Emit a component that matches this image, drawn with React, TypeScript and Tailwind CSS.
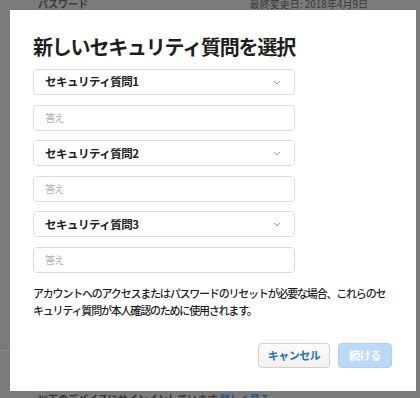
import React from 'react';

const jp = "font-['Hiragino_Sans','Noto_Sans_CJK_JP',sans-serif]";

const Chevron = () => (
  <svg width="8" height="5" viewBox="0 0 8 5" fill="none">
    <path d="M1 1l3 3 3-3" stroke="#9a9a9a" strokeWidth="1" />
  </svg>
);

const QuestionSelect: React.FC<{ label: string }> = ({ label }) => (
  <div className="h-[26px] flex items-center justify-between pl-[11px] pr-[13px] border border-[#dcdcdc] rounded-[4px] bg-white">
    <span className="text-[11.5px] font-bold tracking-[-0.5px] text-[#222]">{label}</span>
    <Chevron />
  </div>
);

const AnswerInput: React.FC = () => (
  <div className="h-[26px] flex items-center pl-[11px] border border-[#dcdcdc] rounded-[4px] bg-white">
    <span className="text-[10.5px] tracking-[-1.5px] text-[#b0b0b0]">答え</span>
  </div>
);

const App: React.FC = () => {
  return (
    <div className={`relative w-[420px] h-[398px] overflow-hidden bg-[#7b7b7b] ${jp}`}>
      {/* page behind the overlay */}
      <div className="flex flex-col h-full">
        <div className="flex justify-between items-start pl-[38px] pr-[52px] -mt-[4px] text-[10px] text-[#3a3a3a]">
          <span className="font-bold">パスワード</span>
          <span>最終変更日: 2018年4月9日</span>
        </div>
        <div className="flex-1" />
        <div className="h-px w-[12px] bg-[#8e8e8e] mb-[40px]" />
        <div className="pl-[38px] -mb-[8px] text-[10px] text-[#333] font-bold">
          以下のデバイスにサインインしています <span className="text-[#23507e]">詳しく見る</span>
        </div>
      </div>

      {/* dialog */}
      <div className="absolute left-[10px] top-[10px] w-[406px] h-[381px] bg-white pt-[24px] pl-[23px] pr-[24px] flex flex-col">
        <h1 className="text-[20px] leading-[26px] font-bold tracking-[-1.2px] text-[#1e1e1e]">
          新しいセキュリティ質問を選択
        </h1>
        <div className="mt-[9px] w-[262px] flex flex-col gap-[9.6px]">
          <QuestionSelect label="セキュリティ質問1" />
          <AnswerInput />
          <QuestionSelect label="セキュリティ質問2" />
          <AnswerInput />
          <QuestionSelect label="セキュリティ質問3" />
          <AnswerInput />
        </div>
        <p className="mt-[12px] text-[11px] leading-[17px] tracking-[-1.2px] font-medium text-[#1e1e1e] whitespace-nowrap">
          アカウントへのアクセスまたはパスワードのリセットが必要な場合、これらのセ
          <br />
          キュリティ質問が本人確認のために使用されます。
        </p>
        <div className="mt-[24px] flex justify-end gap-[8px]">
          <button className="w-[72px] h-[25px] rounded-[4px] border border-[#d0d0d0] bg-gradient-to-b from-[#fcfcfc] to-[#f0f0f0] text-[11px] font-bold tracking-[-0.5px] text-[#1d6fc6]">
            キャンセル
          </button>
          <button className="w-[54px] h-[25px] rounded-[4px] border border-[#b0d0ef] bg-[#badaf5] text-[11px] font-bold tracking-[-0.5px] text-white">
            続ける
          </button>
        </div>
      </div>
    </div>
  );
};

export default App;
